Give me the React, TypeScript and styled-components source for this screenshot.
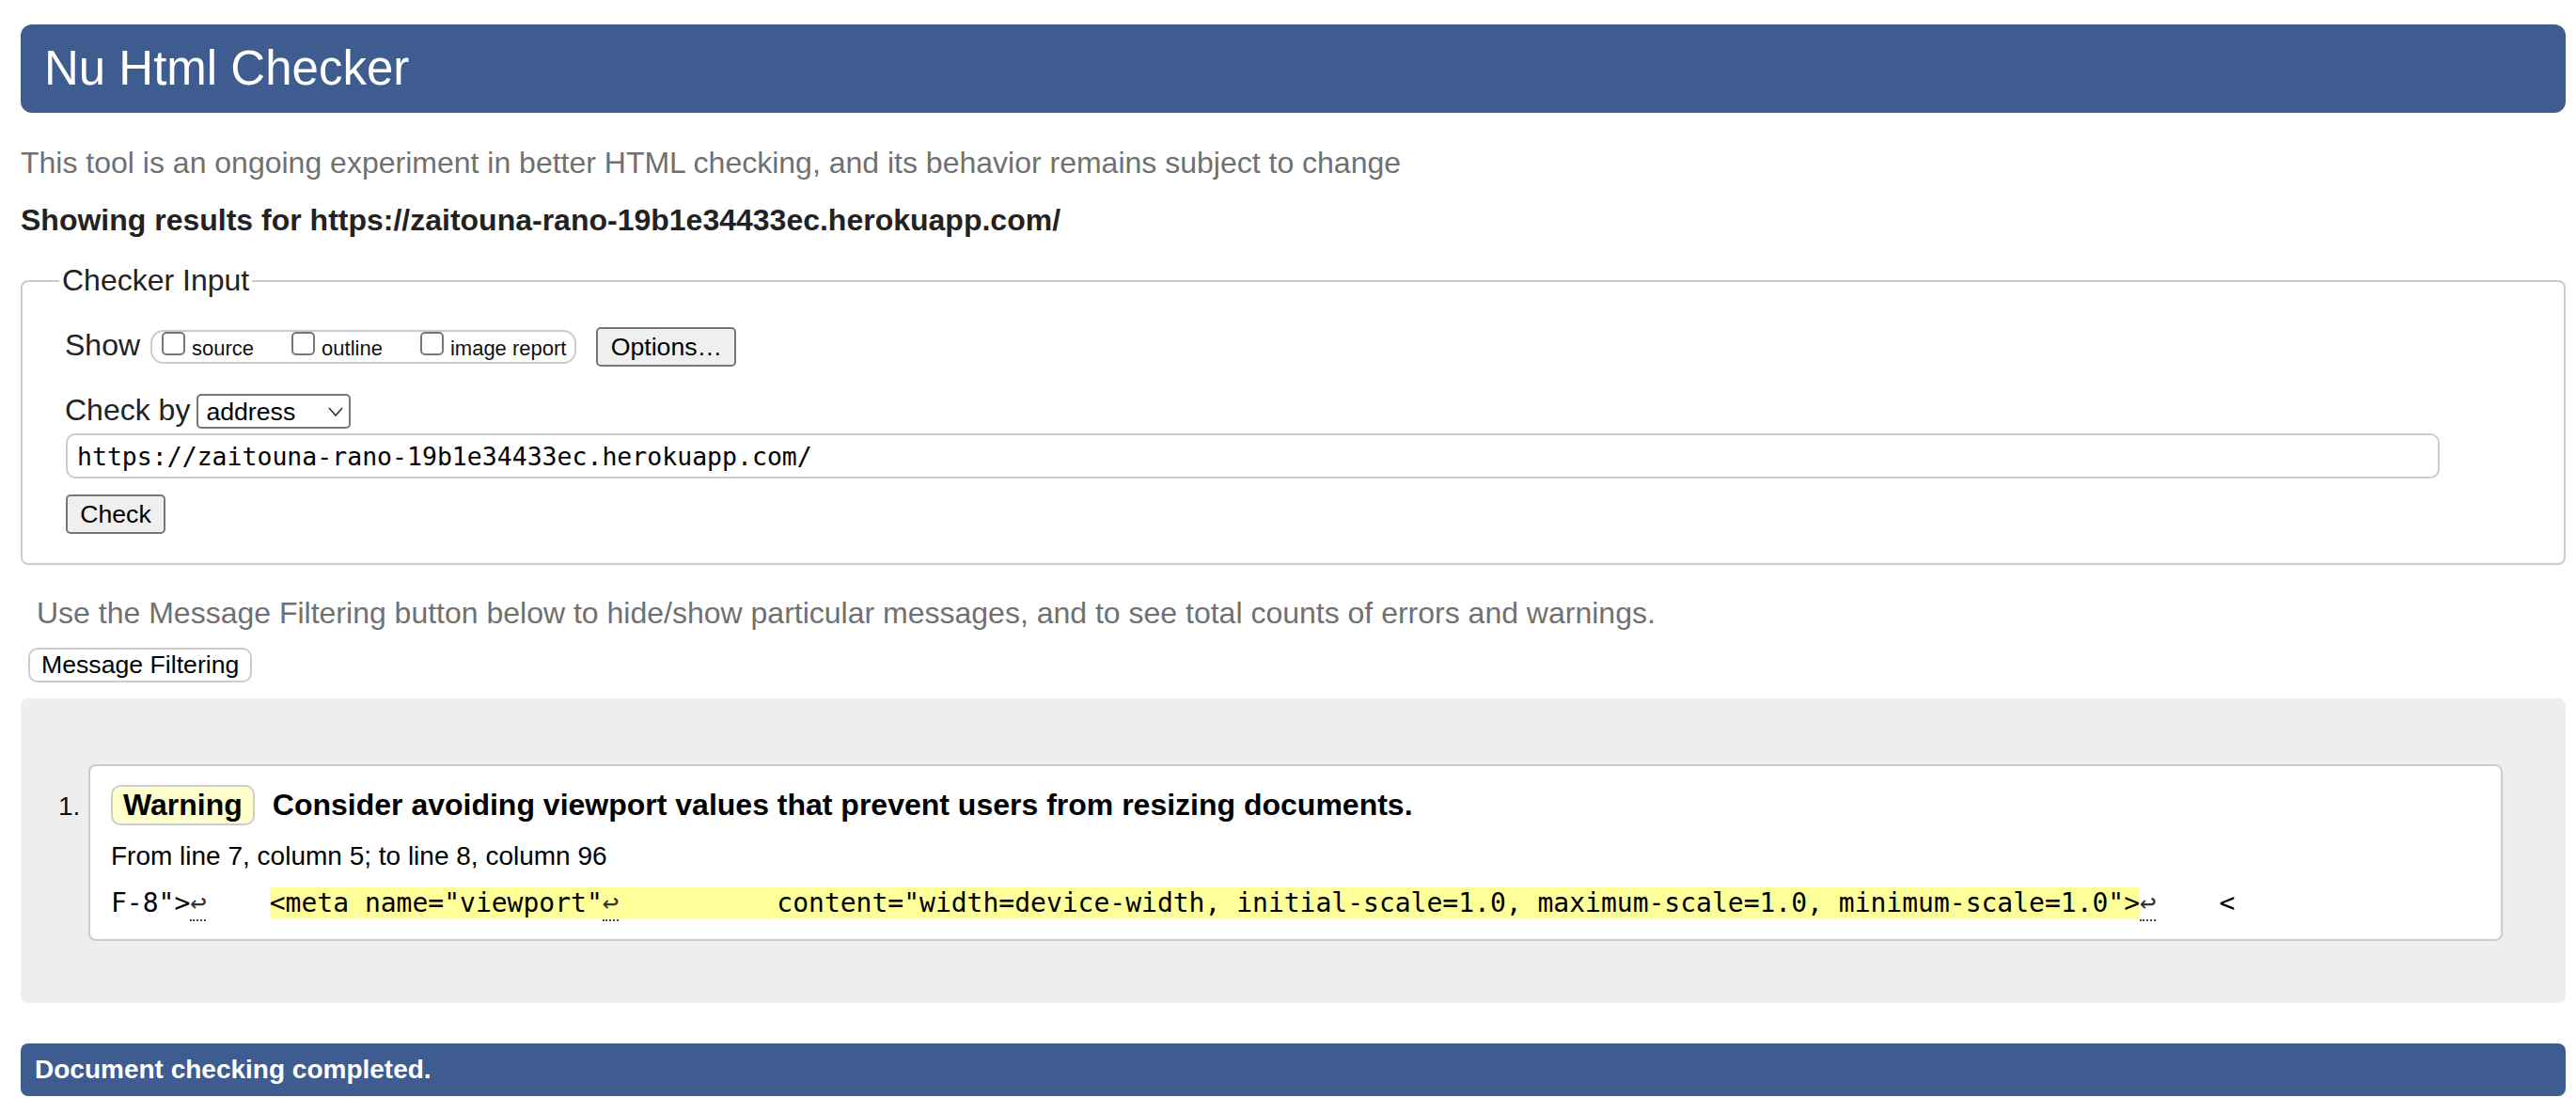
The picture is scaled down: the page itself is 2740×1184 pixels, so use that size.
import React from 'react';
import styled, { createGlobalStyle } from 'styled-components';

const GlobalStyle = createGlobalStyle`
  html, body {
    margin: 0;
    padding: 0;
    background: #ffffff;
  }
  body {
    font-family: "Liberation Sans", Arial, Helvetica, sans-serif;
    color: #000;
  }
`;

const Page = styled.div`
  display: flex;
  flex-direction: column;
  padding: 26px 11px 17px 22px;
`;

const Header = styled.h1`
  margin: 0;
  height: 94px;
  padding-left: 25px;
  background: #3e5c8f;
  color: #fff;
  border-radius: 12px;
  font-size: 51px;
  font-weight: normal;
  line-height: 94px;
`;

const Note = styled.p<{ $top: number; $indent?: number }>`
  margin: ${(p) => p.$top}px 0 0;
  padding-left: ${(p) => p.$indent ?? 0}px;
  font-size: 32px;
  line-height: 37px;
  color: #707070;
`;

const ResultsFor = styled.h2`
  margin: 24px 0 0;
  font-size: 32px;
  line-height: 37px;
  font-weight: bold;
  color: #222;
`;

const Fieldset = styled.fieldset`
  margin: 27px 0 0;
  border: 2px solid #cccccc;
  border-radius: 8px;
  padding: 31px 20px 31px 45px;
  min-width: 0;
`;

const Legend = styled.legend`
  margin-left: -6px;
  padding: 0 3px;
  font-size: 32px;
  line-height: 37px;
  color: #222;
`;

const FormBody = styled.div`
  display: flex;
  flex-direction: column;
  align-items: flex-start;
`;

const Row = styled.div<{ $top?: number }>`
  display: flex;
  align-items: baseline;
  margin-top: ${(p) => p.$top ?? 0}px;
`;

const RowLabel = styled.span<{ $gap: number }>`
  font-size: 32px;
  line-height: 31px;
  color: #222;
  margin-right: ${(p) => p.$gap}px;
`;

const CheckGroup = styled.span`
  display: inline-flex;
  align-items: baseline;
  gap: 40px;
  border: 2px solid #cccccc;
  border-radius: 14px;
  padding: 0 9px 1px 10px;
  margin-right: 21px;
`;

const CheckLabel = styled.label`
  display: inline-flex;
  align-items: baseline;
  font-size: 22px;
  color: #111;
`;

const Box = styled.input`
  appearance: none;
  width: 25px;
  height: 25px;
  margin: 0 7px 0 0;
  border: 2px solid #767676;
  border-radius: 5px;
  background: #fff;
  box-sizing: border-box;
`;

const GreyButton = styled.button<{ $w: number }>`
  width: ${(p) => p.$w}px;
  height: 42px;
  padding: 0;
  border: 2px solid #767676;
  border-radius: 5px;
  background: #efefef;
  font-family: "Liberation Sans", Arial, sans-serif;
  font-size: 26.67px;
  color: #000;
`;

const SelectWrap = styled.span`
  position: relative;
  display: inline-block;
`;

const Select = styled.select`
  appearance: none;
  width: 164px;
  height: 37px;
  padding: 0 0 0 8px;
  border: 2px solid #767676;
  border-radius: 5px;
  background: #fff;
  font-family: "Liberation Sans", Arial, sans-serif;
  font-size: 26.67px;
  color: #000;
`;

const Chevron = styled.svg`
  position: absolute;
  right: 8px;
  top: 14px;
  pointer-events: none;
`;

const UrlInput = styled.input`
  align-self: stretch;
  margin: 5px 112px 0 1px;
  height: 48px;
  box-sizing: border-box;
  padding: 0 10px;
  border: 2px solid #cccccc;
  border-radius: 10px;
  font-family: "DejaVu Sans Mono", "Liberation Mono", monospace;
  font-size: 26.5px;
  color: #000;
`;

const CheckButton = styled(GreyButton)`
  margin: 17px 0 0 1px;
`;

const FilterButton = styled.button`
  align-self: flex-start;
  margin: 18px 0 0 8px;
  height: 37px;
  padding: 0 12px 0 12px;
  border: 2px solid #cccccc;
  border-radius: 10px;
  background: #fff;
  font-family: "Liberation Sans", Arial, sans-serif;
  font-size: 26.67px;
  color: #000;
`;

const Panel = styled.section`
  margin-top: 17px;
  background: #eeeeee;
  border-radius: 8px;
  padding: 70px 67px 66px 40px;
`;

const MessageList = styled.ol`
  margin: 0;
  padding: 0;
  list-style: none;
`;

const MessageItem = styled.li`
  display: flex;
  align-items: baseline;
`;

const ItemNumber = styled.span`
  width: 32px;
  flex: none;
  font-size: 28px;
  color: #111;
`;

const Card = styled.div`
  flex: 1;
  background: #fff;
  border: 2px solid #cccccc;
  border-radius: 8px;
  padding: 20px 22px 19px 22px;
`;

const MessageLine = styled.p`
  margin: 0;
  display: flex;
  align-items: baseline;
  gap: 19px;
  font-size: 32px;
  line-height: 37px;
  font-weight: bold;
`;

const Badge = styled.strong`
  display: inline-block;
  padding: 1px 11px;
  border: 2px solid #cccccc;
  border-radius: 10px;
  background: #ffffcc;
`;

const Location = styled.p`
  margin: 17px 0 0;
  font-size: 28px;
  line-height: 32px;
`;

const Extract = styled.p`
  margin: 15px 0 0;
  font-family: "DejaVu Sans Mono", "Liberation Mono", monospace;
  font-size: 28px;
  line-height: 33px;
  white-space: pre;
`;

const Highlight = styled.mark`
  background: #ffff99;
  color: #000;
`;

const Ret = styled.b`
  display: inline-block;
  width: 17px;
  font-weight: normal;
  font-size: 29px;
  line-height: 36px;
  color: #333;
  border-bottom: 2px dotted #444;
`;

const Footer = styled.footer`
  margin-top: 43px;
  height: 56px;
  padding-left: 15px;
  background: #3e5c8f;
  border-radius: 8px;
  color: #fff;
  font-size: 28px;
  font-weight: bold;
  line-height: 56px;
`;

export default function App() {
  return (
    <>
      <GlobalStyle />
      <Page>
        <Header>Nu Html Checker</Header>
        <Note $top={35}>
          This tool is an ongoing experiment in better HTML checking, and its behavior remains subject to change
        </Note>
        <ResultsFor>Showing results for https://zaitouna-rano-19b1e34433ec.herokuapp.com/</ResultsFor>

        <Fieldset>
          <Legend>Checker Input</Legend>
          <FormBody>
            <Row>
              <RowLabel $gap={11}>Show</RowLabel>
              <CheckGroup>
                <CheckLabel>
                  <Box type="checkbox" />
                  source
                </CheckLabel>
                <CheckLabel>
                  <Box type="checkbox" />
                  outline
                </CheckLabel>
                <CheckLabel>
                  <Box type="checkbox" />
                  image report
                </CheckLabel>
              </CheckGroup>
              <GreyButton $w={149}>Options…</GreyButton>
            </Row>
            <Row $top={29}>
              <RowLabel $gap={7}>Check by</RowLabel>
              <SelectWrap>
                <Select defaultValue="address">
                  <option value="address">address</option>
                  <option value="file">file upload</option>
                  <option value="text">text input</option>
                </Select>
                <Chevron width="16" height="10" viewBox="0 0 16 10">
                  <polyline points="1,1 8,9 15,1" fill="none" stroke="#333" strokeWidth="1.6" />
                </Chevron>
              </SelectWrap>
            </Row>
            <UrlInput type="url" defaultValue="https://zaitouna-rano-19b1e34433ec.herokuapp.com/" />
            <CheckButton $w={106}>Check</CheckButton>
          </FormBody>
        </Fieldset>

        <Note $top={33} $indent={17}>
          Use the Message Filtering button below to hide/show particular messages, and to see total counts of errors and warnings.
        </Note>
        <FilterButton>Message Filtering</FilterButton>

        <Panel>
          <MessageList>
            <MessageItem>
              <ItemNumber>1.</ItemNumber>
              <Card>
                <MessageLine>
                  <Badge>Warning</Badge>
                  <span>Consider avoiding viewport values that prevent users from resizing documents.</span>
                </MessageLine>
                <Location>From line 7, column 5; to line 8, column 96</Location>
                <Extract>
                  {'F-8">'}
                  <Ret>↩</Ret>
                  {'    '}
                  <Highlight>
                    {'<meta name="viewport"'}
                    <Ret>↩</Ret>
                    {'          content="width=device-width, initial-scale=1.0, maximum-scale=1.0, minimum-scale=1.0">'}
                  </Highlight>
                  <Ret>↩</Ret>
                  {'    <'}
                </Extract>
              </Card>
            </MessageItem>
          </MessageList>
        </Panel>

        <Footer>Document checking completed.</Footer>
      </Page>
    </>
  );
}
